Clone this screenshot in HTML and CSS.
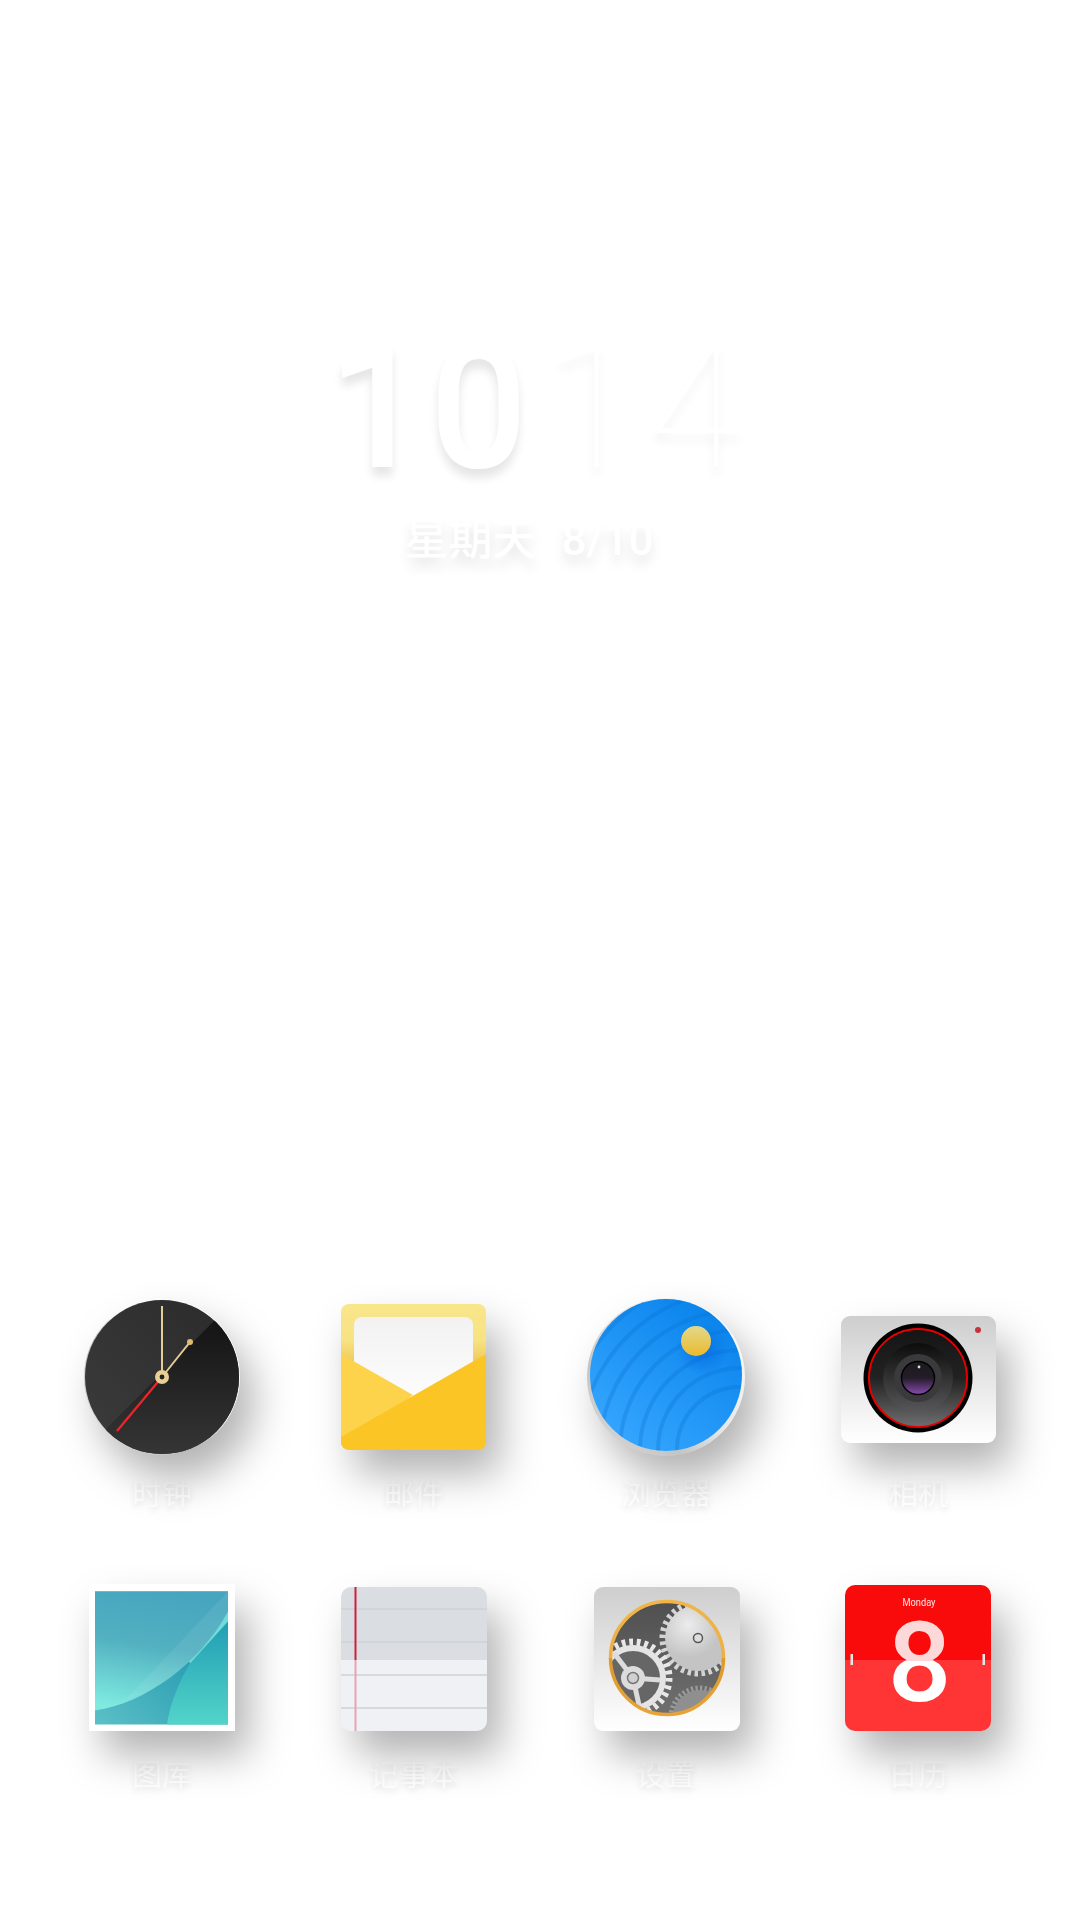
FILE: index.html
```html
<!DOCTYPE html>
<html lang="zh-CN">
<head>
  <meta charset="UTF-8" />
  <title>Home</title>
  <link rel="stylesheet" href="styles.css">
</head>
<body>

<main class="home">
  <section class="time-block">
    <div class="time"><span class="hours">10</span><span class="minutes">14</span></div>
    <div class="date">星期天<span class="date-num">8/10</span></div>
  </section>

  <section class="app-grid">

    <!-- clock -->
    <div class="app">
      <svg class="icon" viewBox="0 0 160 160">
        <defs>
          <linearGradient id="clockRim" x1="1" y1="0" x2="0" y2="1">
            <stop offset="0" stop-color="#ffffff"/><stop offset=".45" stop-color="#f4f4f4"/><stop offset=".6" stop-color="#b5b5b5"/><stop offset="1" stop-color="#e8e8e8"/>
          </linearGradient>
          <linearGradient id="clockDark" x1="0" y1="0" x2="0" y2="1">
            <stop offset="0" stop-color="#0e0e0e"/><stop offset="1" stop-color="#363636"/>
          </linearGradient>
          <linearGradient id="clockLight" x1="1" y1="0" x2="0" y2="1">
            <stop offset="0" stop-color="#2a2a2a"/><stop offset="1" stop-color="#3c3c3c"/>
          </linearGradient>
          <clipPath id="clockFace"><circle cx="80" cy="80" r="77"/></clipPath>
        </defs>
        <circle cx="80" cy="80" r="78" fill="url(#clockRim)"/>
        <g clip-path="url(#clockFace)">
          <rect width="160" height="160" fill="url(#clockLight)"/>
          <polygon points="156,0 160,0 160,160 0,160 0,156" fill="url(#clockDark)"/>
        </g>
        <line x1="80" y1="80" x2="80" y2="9" stroke="#e6cd98" stroke-width="2"/>
        <line x1="80" y1="80" x2="108" y2="45" stroke="#e6cd98" stroke-width="2"/>
        <circle cx="108" cy="45" r="3" fill="#dfbb72"/>
        <line x1="80" y1="80" x2="35" y2="134" stroke="#f02428" stroke-width="2.2"/>
        <circle cx="80" cy="80" r="7" fill="#e8cf92"/>
        <circle cx="80" cy="80" r="2.4" fill="#222"/>
      </svg>
      <div class="app-name">时钟</div>
    </div>

    <!-- mail -->
    <div class="app">
      <svg class="icon" viewBox="0 0 160 160">
        <defs>
          <linearGradient id="mailBack" x1="0" y1="0" x2="0" y2="1">
            <stop offset="0" stop-color="#f9e68c"/><stop offset=".6" stop-color="#f8e282"/><stop offset="1" stop-color="#ecc95a"/>
          </linearGradient>
          <linearGradient id="mailPaper" x1="0" y1="0" x2="0" y2="1">
            <stop offset="0" stop-color="#f2f2f2"/><stop offset="1" stop-color="#ffffff"/>
          </linearGradient>
          <clipPath id="mailShape"><rect width="145" height="146" rx="8"/></clipPath>
        </defs>
        <g transform="translate(7 7)" clip-path="url(#mailShape)">
          <rect width="145" height="60" fill="url(#mailBack)"/>
          <rect x="13" y="13" width="119" height="100" rx="8" fill="url(#mailPaper)"/>
          <polygon points="0,50 72,91 0,146" fill="#fdd34c"/>
          <polygon points="145,50 145,146 0,146 0,133" fill="#fbc625"/>
        </g>
      </svg>
      <div class="app-name">邮件</div>
    </div>

    <!-- browser -->
    <div class="app">
      <svg class="icon" viewBox="0 0 160 160">
        <defs>
          <linearGradient id="browserRim" x1="1" y1="0" x2="0" y2="1">
            <stop offset="0" stop-color="#ffffff"/><stop offset=".5" stop-color="#e6e6e6"/><stop offset=".7" stop-color="#c4c4c4"/><stop offset="1" stop-color="#dddddd"/>
          </linearGradient>
          <linearGradient id="browserBlue" x1=".8" y1=".1" x2=".2" y2=".9">
            <stop offset="0" stop-color="#0a84ec"/><stop offset="1" stop-color="#35a6ff"/>
          </linearGradient>
          <linearGradient id="sunFill" x1="0" y1="0" x2="0" y2="1">
            <stop offset="0" stop-color="#e2d98c"/><stop offset="1" stop-color="#ecba2c"/>
          </linearGradient>
          <radialGradient id="sunShade">
            <stop offset="0" stop-color="#0060d8" stop-opacity=".6"/><stop offset="1" stop-color="#0060d8" stop-opacity="0"/>
          </radialGradient>
          <clipPath id="browserFace"><circle cx="80" cy="78" r="76"/></clipPath>
        </defs>
        <circle cx="80" cy="80" r="79" fill="url(#browserRim)"/>
        <g clip-path="url(#browserFace)">
          <rect width="160" height="160" fill="url(#browserBlue)"/>
          <g class="browser-waves">
            <circle cx="154" cy="153" r="63"/>
            <circle cx="154" cy="153" r="82"/>
            <circle cx="154" cy="153" r="100"/>
            <circle cx="154" cy="153" r="120"/>
            <circle cx="154" cy="153" r="140"/>
            <circle cx="154" cy="153" r="160"/>
            <circle cx="154" cy="153" r="178"/>
          </g>
          <circle cx="116" cy="52" r="26" fill="url(#sunShade)"/>
        </g>
        <circle cx="110" cy="44" r="15" fill="url(#sunFill)"/>
      </svg>
      <div class="app-name">浏览器</div>
    </div>

    <!-- camera -->
    <div class="app">
      <svg class="icon" viewBox="0 0 160 160">
        <defs>
          <linearGradient id="metalBox" x1="0" y1="0" x2="0" y2="1">
            <stop offset="0" stop-color="#cecece"/><stop offset="1" stop-color="#ffffff"/>
          </linearGradient>
          <linearGradient id="lensOuter" x1="0" y1="0" x2="0" y2="1">
            <stop offset="0" stop-color="#151515"/><stop offset=".5" stop-color="#222"/><stop offset="1" stop-color="#6e6e70"/>
          </linearGradient>
          <linearGradient id="lensMid" x1="0" y1="0" x2="0" y2="1">
            <stop offset="0" stop-color="#0c0c0c"/><stop offset="1" stop-color="#58585a"/>
          </linearGradient>
          <linearGradient id="lensGlass" x1="0" y1="0" x2="0" y2="1">
            <stop offset="0" stop-color="#1a1a1c"/><stop offset=".5" stop-color="#241c2a"/><stop offset="1" stop-color="#8a4bb0"/>
          </linearGradient>
        </defs>
        <g transform="translate(3 19)">
          <rect width="155" height="127" rx="9" fill="url(#metalBox)"/>
          <circle cx="137" cy="14" r="3" fill="#c8323a"/>
          <circle cx="77" cy="62" r="54.5" fill="#000"/>
          <circle cx="77" cy="62" r="49" fill="url(#lensOuter)" stroke="#e60000" stroke-width="2"/>
          <circle cx="77" cy="62" r="35" fill="url(#lensMid)"/>
          <circle cx="77" cy="62" r="24" fill="#3a3a3d"/>
          <circle cx="77" cy="62" r="16.5" fill="url(#lensGlass)" stroke="#000" stroke-width="1.5"/>
          <circle cx="78" cy="51" r="1.4" fill="#ddd"/>
        </g>
      </svg>
      <div class="app-name">相机</div>
    </div>

    <!-- gallery -->
    <div class="app">
      <svg class="icon" viewBox="0 0 160 160">
        <defs>
          <linearGradient id="galTop" x1=".5" y1="0" x2=".3" y2="1">
            <stop offset="0" stop-color="#46a6bf"/><stop offset=".45" stop-color="#52b0c0"/><stop offset="1" stop-color="#7feae0"/>
          </linearGradient>
          <linearGradient id="galUnder" x1="1" y1="0" x2="0" y2="1">
            <stop offset="0" stop-color="#0a87a8"/><stop offset="1" stop-color="#5cc0c6"/>
          </linearGradient>
          <linearGradient id="galPage" x1="0" y1="0" x2="0" y2="1">
            <stop offset="0" stop-color="#219db4"/><stop offset="1" stop-color="#53d4c9"/>
          </linearGradient>
        </defs>
        <g transform="translate(7 6)">
          <rect width="146" height="147" fill="#fff"/>
          <g transform="translate(6 7.5)">
            <rect width="133" height="133" fill="url(#galUnder)"/>
            <path d="M95,72C84,90 75,112 72,133H133V30Z" fill="url(#galPage)"/>
            <path d="M95,72L133,30V10L90,60Z" fill="#6fdcd8"/>
            <path d="M0,0H133V20C105,72 50,112 0,119Z" fill="url(#galTop)"/>
            <path d="M133,0L30,109C60,100 105,72 133,20Z" fill="#fff" opacity=".07"/>
          </g>
        </g>
      </svg>
      <div class="app-name">图库</div>
    </div>

    <!-- notes -->
    <div class="app">
      <svg class="icon" viewBox="0 0 160 160">
        <defs>
          <clipPath id="noteShape"><rect width="146" height="144" rx="10"/></clipPath>
        </defs>
        <g transform="translate(7 9)" clip-path="url(#noteShape)">
          <rect width="146" height="73" fill="#dadde1"/>
          <rect y="73" width="146" height="71" fill="#f0f1f4"/>
          <g class="note-lines">
            <line x1="0" x2="146" y1="22" y2="22"/>
            <line x1="0" x2="146" y1="55" y2="55"/>
            <line x1="0" x2="146" y1="88" y2="88"/>
            <line x1="0" x2="146" y1="121" y2="121"/>
          </g>
          <rect x="13.5" width="2" height="73" fill="#cf1f3a"/>
          <rect x="13.5" y="73" width="2" height="71" fill="#e8a3b3"/>
        </g>
      </svg>
      <div class="app-name">记事本</div>
    </div>

    <!-- settings -->
    <div class="app">
      <svg class="icon" viewBox="0 0 160 160">
        <defs>
          <linearGradient id="setBack" x1="0" y1="0" x2="0" y2="1">
            <stop offset="0" stop-color="#4e4e4e"/><stop offset="1" stop-color="#727272"/>
          </linearGradient>
          <linearGradient id="setRing" x1="0" y1="0" x2="0" y2="1">
            <stop offset="0" stop-color="#f0b448"/><stop offset=".5" stop-color="#efb043"/><stop offset=".5" stop-color="#df9a2c"/><stop offset="1" stop-color="#e8a336"/>
          </linearGradient>
          <radialGradient id="setGear" cx=".35" cy=".3">
            <stop offset="0" stop-color="#ececec"/><stop offset="1" stop-color="#c4c4c4"/>
          </radialGradient>
          <clipPath id="setFace"><circle cx="73" cy="71" r="56"/></clipPath>
        </defs>
        <g transform="translate(8 9)">
          <rect width="146" height="144" rx="9" fill="url(#metalBox)"/>
          <g clip-path="url(#setFace)">
            <rect x="10" y="10" width="126" height="126" fill="url(#setBack)"/>
            <circle cx="106" cy="130" r="27" fill="#8f8f8f"/>
            <circle class="gear-teeth small" cx="106" cy="130" r="29" pathLength="80"/>
            <circle class="gear-teeth big" cx="104" cy="51" r="35" pathLength="64"/>
            <circle cx="104" cy="51" r="33" fill="url(#setGear)"/>
            <circle cx="104" cy="51" r="4.5" fill="#ddd" stroke="#555" stroke-width="1.5"/>
            <circle class="gear-teeth front" cx="39" cy="91" r="36" pathLength="60"/>
            <circle cx="39" cy="91" r="30" fill="#666" stroke="#e4e4e4" stroke-width="6"/>
            <g class="gear-spokes">
              <line x1="39" y1="91" x2="20" y2="66"/>
              <line x1="39" y1="91" x2="66" y2="93"/>
              <line x1="39" y1="91" x2="45" y2="118"/>
            </g>
            <circle cx="39" cy="91" r="12" fill="#dcdcdc"/>
            <circle cx="39" cy="91" r="5.5" fill="#d0d0d0" stroke="#777" stroke-width="1.5"/>
          </g>
          <circle cx="73" cy="71" r="56.5" fill="none" stroke="url(#setRing)" stroke-width="3.5"/>
        </g>
      </svg>
      <div class="app-name">设置</div>
    </div>

    <!-- calendar -->
    <div class="app">
      <svg class="icon" viewBox="0 0 160 160">
        <defs>
          <linearGradient id="calDigit" x1="0" y1="0" x2="0" y2="1">
            <stop offset=".49" stop-color="#fdd8d8"/><stop offset=".49" stop-color="#ffffff"/>
          </linearGradient>
          <clipPath id="calShape"><rect width="146" height="146" rx="10"/></clipPath>
        </defs>
        <g transform="translate(7 7)">
          <g clip-path="url(#calShape)">
            <rect width="146" height="75" fill="#fa0b0b"/>
            <rect y="75" width="146" height="71" fill="#ff3535"/>
          </g>
          <text class="cal-day" x="74" y="21" text-anchor="middle" textLength="33" lengthAdjust="spacingAndGlyphs">Monday</text>
          <text class="cal-date" x="74.5" y="116" text-anchor="middle" fill="url(#calDigit)">8</text>
          <rect x="5.5" y="69" width="2.5" height="11" fill="#e8e8e8"/>
          <rect x="137.5" y="69" width="2.5" height="11" fill="#e8e8e8"/>
        </g>
      </svg>
      <div class="app-name">日历</div>
    </div>

  </section>
</main>

</body>
</html>
```

FILE: styles.css
```css
body {
  margin: 0;
  background-color: #fff;
  font-family: 'Roboto', 'Noto Sans CJK SC', sans-serif;
  color: #fff;
}

.home {
  width: 1080px;
  height: 1920px;
  overflow: hidden;
  display: flex;
  flex-direction: column;
  justify-content: space-between;
}

.time-block {
  padding-top: 322px;
  text-align: center;
}

.time {
  font-size: 172px;
  line-height: 172px;
  letter-spacing: 10px;
  text-shadow: 0 9px 10px rgba(0, 0, 0, 0.1);
}

.hours {
  font-weight: 500;
  letter-spacing: 4px;
  margin-right: 12px;
}

.minutes {
  font-weight: 100;
  text-shadow: 0 9px 10px rgba(0, 0, 0, 0.05);
}

.date {
  margin-top: 21px;
  padding-right: 22px;
  font-size: 44px;
  font-weight: 500;
  line-height: 50px;
  text-shadow: 0 9px 12px rgba(0, 0, 0, 0.1);
}

.date-num {
  margin-left: 25px;
}

.app-grid {
  display: grid;
  grid-template-columns: repeat(4, 252px);
  row-gap: 67px;
  padding: 0 36px 128px;
}

.app {
  display: flex;
  flex-direction: column;
  align-items: center;
  gap: 14px;
}

.icon {
  width: 160px;
  height: 160px;
  overflow: visible;
  filter: drop-shadow(14px 24px 20px rgba(0, 0, 0, 0.3));
}

.app-name {
  font-family: 'Noto Sans CJK SC', sans-serif;
  font-size: 30px;
  line-height: 40px;
  text-shadow: 0 3px 6px rgba(0, 0, 0, 0.1);
}

.browser-waves circle {
  fill: none;
  stroke: #0a6fd0;
  stroke-opacity: 0.3;
  stroke-width: 4;
}

.note-lines line {
  stroke: #cfd1d5;
  stroke-width: 1.5;
}

.gear-teeth {
  fill: none;
  stroke-dasharray: 1 1;
}

.gear-teeth.big {
  stroke: #d4d4d4;
  stroke-width: 7;
}

.gear-teeth.front {
  stroke: #e8e8e8;
  stroke-width: 7;
}

.gear-teeth.small {
  stroke: #9a9a9a;
  stroke-width: 5;
}

.gear-spokes line {
  stroke: #dcdcdc;
  stroke-width: 5;
}

.cal-day {
  font-size: 11.5px;
  fill: #ffe6e6;
}

.cal-date {
  font-size: 112px;
  font-weight: 500;
}
```
